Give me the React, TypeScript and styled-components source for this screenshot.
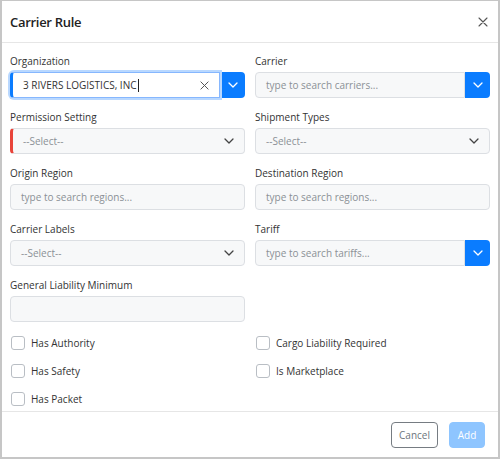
import styled, { createGlobalStyle } from "styled-components"

const GlobalStyle = createGlobalStyle`
  html, body {
    margin: 0;
    padding: 0;
    background: #c6c6c6;
  }
  * { box-sizing: border-box; }
`

const Chevron = ({ color }: { color: string }) => (
  <svg width="10" height="6" viewBox="0 0 10 6" fill="none">
    <path d="M1 1l4 4 4-4" stroke={color} strokeWidth="1.3" strokeLinecap="round" strokeLinejoin="round" />
  </svg>
)

const Cross = ({ size }: { size: number }) => (
  <svg width={size} height={size} viewBox="0 0 10 10" fill="none">
    <path d="M1 1l8 8M9 1l-8 8" stroke="#555" strokeWidth="1.1" strokeLinecap="round" />
  </svg>
)

const Modal = styled.div`
  margin: 1px 2px 2px 2px;
  height: calc(100vh - 3px);
  background: #fff;
  display: flex;
  flex-direction: column;
  font-family: "Open Sans", "Noto Sans", sans-serif;
  color: #333;
`

const Header = styled.div`
  height: 42px;
  flex: none;
  display: flex;
  align-items: center;
  justify-content: space-between;
  padding: 0 10px 0 8px;
  border-bottom: 1px solid #e6e6e6;
`

const Title = styled.h1`
  margin: 0;
  font-size: 13px;
  font-weight: 600;
  letter-spacing: -0.3px;
  color: #222;
`

const CloseButton = styled.button`
  border: 0;
  background: none;
  padding: 0;
  display: flex;
  cursor: pointer;
`

const Body = styled.div`
  flex: 1;
  padding: 10px 8px 0 8px;
`

const Grid = styled.div`
  display: grid;
  grid-template-columns: 1fr 1fr;
  column-gap: 10px;
  row-gap: 11px;
`

const Field = styled.div`
  display: flex;
  flex-direction: column;
`

const Label = styled.label`
  font-size: 10px;
  line-height: 16px;
  margin-bottom: 3px;
  color: #333;
`

const Group = styled.div`
  display: flex;
  height: 26px;
`

const InputBox = styled.div<{ $focused?: boolean; $marker?: string; $grouped?: boolean }>`
  flex: 1;
  display: flex;
  align-items: center;
  padding: 0 10px 0 10px;
  font-size: 10px;
  border: 1px solid ${(p) => (p.$focused ? "#86b7fe" : "#dcdfe3")};
  border-left: ${(p) => (p.$marker ? `3px solid ${p.$marker}` : p.$focused ? "1px solid #86b7fe" : "1px solid #dcdfe3")};
  border-radius: ${(p) => (p.$grouped ? "4px 0 0 4px" : "4px")};
  background: ${(p) => (p.$focused ? "#fff" : "#f7f8f9")};
  box-shadow: ${(p) => (p.$focused ? "0 0 0 2px #b9d8ff" : "none")};
  color: #333;
  position: relative;
  z-index: ${(p) => (p.$focused ? 1 : 0)};
`

const Placeholder = styled.span`
  flex: 1;
  color: #8b9096;
`

const Value = styled.span`
  flex: 1;
  color: #333;
`

const Caret = styled.span`
  display: inline-block;
  width: 1px;
  height: 13px;
  background: #222;
  vertical-align: -3px;
  margin-left: 1px;
`

const Addon = styled.button`
  width: 25px;
  flex: none;
  border: 0;
  border-radius: 0 4px 4px 0;
  background: #0a7cff;
  display: flex;
  align-items: center;
  justify-content: center;
  padding: 0;
`

const Checks = styled.div`
  display: grid;
  grid-template-columns: 1fr 1fr;
  column-gap: 10px;
  row-gap: 12px;
  margin-top: 13px;
`

const CheckRow = styled.label`
  display: flex;
  align-items: center;
  gap: 6px;
  height: 16px;
  font-size: 10px;
  color: #333;
  padding-left: 1px;
`

const Box = styled.span`
  width: 14px;
  height: 14px;
  border: 1px solid #b9bec4;
  border-radius: 3px;
  background: #fff;
`

const Footer = styled.div`
  height: 46px;
  flex: none;
  border-top: 1px solid #e6e6e6;
  display: flex;
  justify-content: flex-end;
  align-items: flex-start;
  gap: 11px;
  padding: 10px 13px 0 0;
`

const Button = styled.button<{ $variant: "outline" | "primary" }>`
  height: 26px;
  padding: 0 7px;
  font-family: inherit;
  font-size: 10px;
  border-radius: 4px;
  border: 1px solid ${(p) => (p.$variant === "outline" ? "#767c82" : "#8ec5ff")};
  background: ${(p) => (p.$variant === "outline" ? "#fff" : "#8ec5ff")};
  color: ${(p) => (p.$variant === "outline" ? "#6c757d" : "#fff")};
  min-width: ${(p) => (p.$variant === "outline" ? "47px" : "36px")};
`

const SelectField = ({ label, marker }: { label: string; marker?: string }) => (
  <Field>
    <Label>{label}</Label>
    <Group>
      <InputBox $marker={marker}>
        <Placeholder>--Select--</Placeholder>
        <Chevron color="#444" />
      </InputBox>
    </Group>
  </Field>
)

const SearchField = ({ label, placeholder, addon }: { label: string; placeholder?: string; addon?: boolean }) => (
  <Field>
    <Label>{label}</Label>
    <Group>
      <InputBox $grouped={addon}>
        <Placeholder>{placeholder}</Placeholder>
      </InputBox>
      {addon && (
        <Addon>
          <Chevron color="#fff" />
        </Addon>
      )}
    </Group>
  </Field>
)

export default function App() {
  return (
    <>
      <GlobalStyle />
      <Modal>
        <Header>
          <Title>Carrier Rule</Title>
          <CloseButton>
            <Cross size={10} />
          </CloseButton>
        </Header>
        <Body>
          <Grid>
            <Field>
              <Label>Organization</Label>
              <Group>
                <InputBox $focused $grouped $marker="#0a7cff">
                  <Value>
                    3 RIVERS LOGISTICS, INC<Caret />
                  </Value>
                  <Cross size={9} />
                </InputBox>
                <Addon>
                  <Chevron color="#fff" />
                </Addon>
              </Group>
            </Field>
            <SearchField label="Carrier" placeholder="type to search carriers..." addon />
            <SelectField label="Permission Setting" marker="#e8443a" />
            <SelectField label="Shipment Types" />
            <SearchField label="Origin Region" placeholder="type to search regions..." />
            <SearchField label="Destination Region" placeholder="type to search regions..." />
            <SelectField label="Carrier Labels" />
            <SearchField label="Tariff" placeholder="type to search tariffs..." addon />
            <SearchField label="General Liability Minimum" />
          </Grid>
          <Checks>
            <CheckRow><Box />Has Authority</CheckRow>
            <CheckRow><Box />Cargo Liability Required</CheckRow>
            <CheckRow><Box />Has Safety</CheckRow>
            <CheckRow><Box />Is Marketplace</CheckRow>
            <CheckRow><Box />Has Packet</CheckRow>
          </Checks>
        </Body>
        <Footer>
          <Button $variant="outline">Cancel</Button>
          <Button $variant="primary">Add</Button>
        </Footer>
      </Modal>
    </>
  )
}
